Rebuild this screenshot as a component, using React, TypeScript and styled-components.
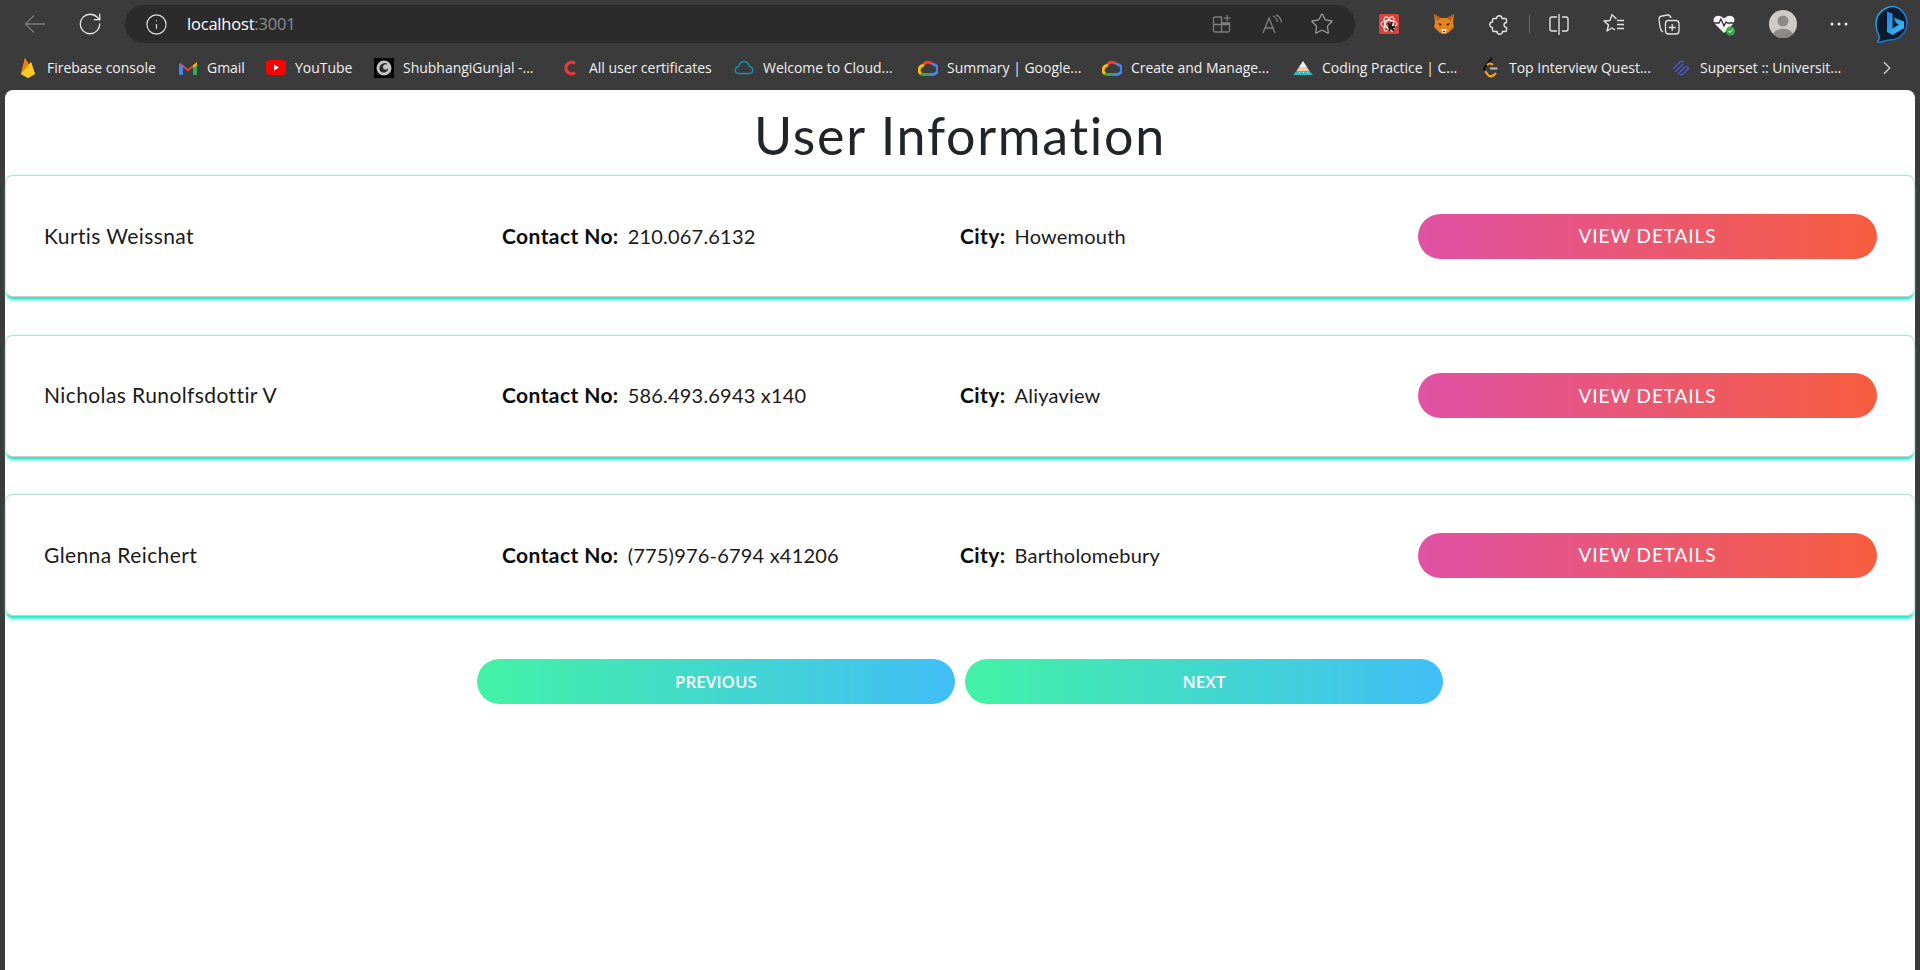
import React from "react";
import styled, { createGlobalStyle } from "styled-components";
import { Info, RotateCw, ChevronRight, Star } from "lucide-react";

const Global = createGlobalStyle`
  html, body { margin: 0; padding: 0; background: #3b3b3b; height: 100%; overflow: hidden; }
  * { box-sizing: border-box; }
  svg { flex: none; display: block; }
`;
const Browser = styled.div`width: 1920px; height: 970px; display: flex; flex-direction: column; background: #3b3b3b; font-family: "Open Sans", sans-serif;`;
const Toolbar = styled.div`height: 48px; display: flex; align-items: center; flex: none; color: #e2e2e2;`;
const NavBtn = styled.div<{ $dim?: boolean }>`width: 26px; height: 26px; margin-left: ${p => (p.$dim ? "22px" : "29px")}; color: ${p => (p.$dim ? "#7b7b7b" : "#e6e6e6")}; display: flex; align-items: center; justify-content: center;`;
const Omni = styled.div`margin-left: 22px; width: 1230px; height: 38px; border-radius: 19px; background: #2b2b2b; display: flex; align-items: center; padding: 0 21px 0 20px; color: #e2e2e2;`;
const Url = styled.div`margin-left: 19px; padding-bottom: 2px; font-size: 16.5px; letter-spacing: -0.2px; color: #fff; flex: 1;`;
const Port = styled.span`color: #8d8d8d;`;
const OmniIcon = styled.div<{ $bright?: boolean }>`display: flex; align-items: center; justify-content: center; width: 24px; height: 24px; margin-left: 26px; color: ${p => (p.$bright ? "#a0a0a0" : "#7f7f7f")};`;
const Ext = styled.div`display: flex; align-items: center; justify-content: center; width: 24px; height: 24px; flex: none;`;
const AvatarSlot = styled(Ext)`width: 28px; height: 28px; margin-left: 2px; margin-right: -1px;`;
const BingSlot = styled(Ext)`margin-left: -1px;`;
const Tools = styled.div`display: flex; align-items: center; margin-left: 22px; gap: 31px; flex: 1;`;
const Sep = styled.div`width: 1px; height: 20px; background: #666; margin: 0 -14px 0 -13px;`;
const Bookmarks = styled.div`height: 42px; display: flex; align-items: center; flex: none; padding: 0 0 3px 18px; position: relative;`;
const Bm = styled.div<{ $w: number }>`width: ${p => p.$w}px; flex: none; display: flex; align-items: center; gap: 9px; color: #f0f0f0; font-size: 14px; letter-spacing: -0.02px; white-space: nowrap;`;
const BmIcon = styled.div`width: 20px; height: 20px; display: flex; align-items: center; justify-content: center; flex: none;`;
const More = styled.div`position: absolute; right: 22px; top: 9px; color: #ddd; display: flex;`;
const Page = styled.main`flex: 1; margin: 0 5px; background: #fff; border-radius: 8px 8px 0 0; color: #1a1a1a; font-family: "Comic Sans MS", "Lato", sans-serif;`;
const Title = styled.h1`margin: 0; height: 85px; padding-top: 4px; display: flex; align-items: center; justify-content: center; font-size: 52px; letter-spacing: 1.7px; font-weight: 400; color: #212529;`;
const Cards = styled.div`display: flex; flex-direction: column; gap: 37.5px;`;
const Card = styled.section`height: 122px; border: 1px solid #d3e3e0; border-top-color: #c0dcd7; border-bottom-color: #cfcfcf; border-radius: 8px; box-shadow: 0 4px 3px -1px #20ecc4, 0 -1px 3px rgba(60, 230, 200, 0.22); display: grid; grid-template-columns: repeat(4, 458px); padding-left: 38px; align-items: center; background: #fff; font-size: 21px; letter-spacing: 0.4px;`;
const Cell = styled.div`padding-bottom: 2px;`;
const Strong = styled.b`font-weight: 700; margin-right: 9px; color: #0c0c0c;`;
const Value = styled.span`font-size: 20px; letter-spacing: 0.2px;`;
const ViewBtn = styled.button`width: 459px; height: 45px; border: 0; border-radius: 23px; padding-bottom: 2px; background: linear-gradient(90deg, #df52a6, #f65d3e); color: #fff; font: inherit; font-size: 19px; letter-spacing: 0.9px; text-transform: uppercase;`;
const Pager = styled.div`display: flex; justify-content: center; gap: 10px; margin-top: 43px;`;
const PageBtn = styled.button`width: 478px; height: 45px; border: 0; border-radius: 23px; background: linear-gradient(90deg, #43f2a5, #41bef7); color: #fff; font-family: "Open Sans", sans-serif; font-size: 17px; font-weight: 600; text-transform: uppercase;`;

const rows = [
  { name: "Kurtis Weissnat", phone: "210.067.6132", city: "Howemouth" },
  { name: "Nicholas Runolfsdottir V", phone: "586.493.6943 x140", city: "Aliyaview" },
  { name: "Glenna Reichert", phone: "(775)976-6794 x41206", city: "Bartholomebury" },
];
const GCloud = () => (
  <svg width="20" height="17" viewBox="0 0 20 17" fill="none" strokeWidth="3">
    <path d="M5.200 6.500A5.200 5.200 0 0 1 14 5" stroke="#ea4335" />
    <path d="M14 5.200a4.800 4.800 0 0 1 1 10.300H11" stroke="#4285f4" />
    <path d="M11 15.500H5a3.500 3.500 0 0 1-2-.7" stroke="#34a853" />
    <path d="M3 14.800A4.600 4.600 0 0 1 5.800 6.500" stroke="#fbbc05" />
  </svg>
);
const bookmarks: [string, number, React.ReactNode][] = [
  ["Firebase console", 160, <svg width="16" height="22" viewBox="0 0 16 22"><path d="M1 17 5 1l4 7 2-3 4 12-7 4z" fill="#ffa000" /><path d="M1 17 5 1l5 9z" fill="#f57c00" /><path d="M1 17 11 5l4 12-7 4z" fill="#ffca28" /></svg>],
  ["Gmail", 88, <svg width="18" height="14" viewBox="0 0 18 14"><path d="M1 1.500 9 8l8-6.500V4L9 10.500 1 4z" fill="#ea4335" /><path d="M0 2.500 4 5v9H1a1 1 0 0 1-1-1z" fill="#4285f4" /><path d="M18 2.500 14 5v9h3a1 1 0 0 0 1-1z" fill="#34a853" /><path d="M14 4.500 18 1v3l-4 3z" fill="#fbbc05" /></svg>],
  ["YouTube", 108, <svg width="20" height="15" viewBox="0 0 20 15"><rect width="20" height="15" rx="4" fill="#f00" /><path d="M8 4.500l5 3-5 3z" fill="#fff" /></svg>],
  ["ShubhangiGunjal -...", 186, <svg width="20" height="20" viewBox="0 0 20 20"><rect width="20" height="20" fill="#000" /><circle cx="10" cy="10" r="7.500" fill="#c4c4c4" /><path d="M6 8a5 5 0 0 1 8-1.500c-3-1-5.500.5-5 3s4 3 5 .5c.5 3-2.500 5-5 4.500C5.500 14 4.800 10.500 6 8z" fill="#2b2b2b" /></svg>],
  ["All user certificates", 174, <svg width="14" height="18" viewBox="0 0 14 18"><path d="M12 4.500A5.500 5.500 0 0 0 3 9a5.500 5.500 0 0 0 9 4.500" fill="none" stroke="#e53935" strokeWidth="3.200" /></svg>],
  ["Welcome to Cloud...", 184, <svg width="20" height="15" viewBox="0 0 20 15"><path d="M5 13.500a3.500 3.500 0 0 1-.4-7C5.500 3.500 7.500 1.500 10 1.500s4.500 2 5.400 5a3.500 3.500 0 0 1-.4 7z" fill="none" stroke="#1793b5" strokeWidth="1.400" /></svg>],
  ["Summary | Google...", 184, <GCloud />],
  ["Create and Manage...", 191, <GCloud />],
  ["Coding Practice | C...", 187, <svg width="20" height="14" viewBox="0 0 20 14"><path d="M10 0l4 6H6z" fill="#f2f2f2" /><path d="M6 6h8l2.500 4h-13z" fill="#f3c9a5" /><path d="M3.500 10h13L20 14H0z" fill="#35b8bd" /><path d="M8 7.500h1v1H8zM11 7.500h1v1h-1zM6 11h1v1H6zM10 11h1v1h-1zM14 11h1v1h-1z" fill="#fff" /></svg>],
  ["Top Interview Quest...", 191, <svg width="16" height="22" viewBox="0 0 16 22"><path d="M10 1 3 10c-1 1-1 3 0 4l3 4" fill="none" stroke="#111" strokeWidth="2.200" /><path d="M3 14l3 4c1.500 1.500 4 1.500 6 0l2-2" fill="none" stroke="#ffa116" strokeWidth="2.200" /><path d="M8 11.500h7.500" stroke="#b5b5b5" strokeWidth="2.200" /><path d="M5 8c2-2 4-2 6 0" fill="none" stroke="#ffa116" strokeWidth="1.800" /></svg>],
  ["Superset :: Universit...", 170, <svg width="20" height="18" viewBox="0 0 20 18" fill="none" stroke="#4a55c8" strokeWidth="1.700"><path d="M2 10l7-7c1-1 3-1 4 0M4 13l8-8M6.500 15.500l7-7c1-1 3-1 4 0M9 16c2 0 3-1 4-2l5-5" /></svg>],
];
export default function App() {
  return (
    <Browser>
      <Global />
      <Toolbar>
        <NavBtn $dim>
          <svg width="22" height="20" viewBox="0 0 22 20" fill="none" stroke="currentColor" strokeWidth="1.300"><path d="M21 10H1.500M10 1.500 1.500 10l8.500 8.500" /></svg>
        </NavBtn>
        <NavBtn><RotateCw size={26} strokeWidth={1.2} /></NavBtn>
        <Omni>
          <Info size={23} strokeWidth={1.2} />
          <Url>localhost<Port>:3001</Port></Url>
          <OmniIcon>
            <svg width="20" height="20" viewBox="0 0 20 20" fill="none" stroke="currentColor" strokeWidth="1.300"><path d="M9.500 3H3a1.500 1.500 0 0 0-1.500 1.500v12A1.500 1.500 0 0 0 3 18h13a1.500 1.500 0 0 0 1.500-1.500V9H9.500zM1.500 10.500h16M9.500 9v9M15 1v6.500M11.500 4.200h7" /></svg>
          </OmniIcon>
          <OmniIcon>
            <svg width="22" height="20" viewBox="0 0 22 20" fill="none" stroke="currentColor" strokeWidth="1.300"><path d="M2 19 8 4l6 15M4 14h8M12 2c2.500 1 4 3 4.500 6M15 .8c3 1.200 5 4 5.500 7.500" /></svg>
          </OmniIcon>
          <OmniIcon $bright><Star size={24} strokeWidth={1.2} /></OmniIcon>
        </Omni>
        <Tools>
          <Ext>
            <svg width="20" height="20" viewBox="0 0 20 20"><rect width="20" height="20" rx="1.500" fill="#d8443b" /><g fill="none" stroke="#fff" strokeWidth="1"><ellipse cx="10" cy="10" rx="8" ry="3.500" /><ellipse cx="10" cy="10" rx="8" ry="3.500" transform="rotate(60 10 10)" /><ellipse cx="10" cy="10" rx="8" ry="3.500" transform="rotate(120 10 10)" /></g><path d="M9 9l6 8M13 8l-3 9M9 13h7" stroke="#1d1d1d" strokeWidth="2" /></svg>
          </Ext>
          <Ext>
            <svg width="20" height="20" viewBox="0 0 20 20"><path d="M0 0l7 4h6l7-4-1 9 1 4-5 5-3 2H8l-3-2-5-5 1-4z" fill="#e8821e" /><path d="M0 0l7 4-4 3zM20 0l-7 4 4 3z" fill="#b35f16" /><path d="M7 15h6l-1.500 4h-3z" fill="#f2e4d5" /><path d="M8.500 17h3l-1.500 1.500z" fill="#222" /><path d="M4 9l4 1-2 2zM16 9l-4 1 2 2z" fill="#2a2a2a" /></svg>
          </Ext>
          <Ext>
            <svg width="24" height="24" viewBox="0 0 24 24" fill="none" stroke="currentColor" strokeWidth="1.400"><path d="M9.500 6.500a2.750 2.750 0 1 1 5.500 0H18a1.500 1.500 0 0 1 1.500 1.500v2.500a2.500 2.500 0 0 0 0 5V18a1.500 1.500 0 0 1-1.500 1.500h-2.500a2.750 2.750 0 0 1-5.500 0H7A1.500 1.500 0 0 1 5.500 18v-2.500a2.750 2.750 0 0 1 0-5.500V8A1.500 1.500 0 0 1 7 6.500z" /></svg>
          </Ext>
          <Sep />
          <Ext>
            <svg width="22" height="22" viewBox="0 0 22 22" fill="none" stroke="currentColor" strokeWidth="1.400"><path d="M9 4H4a2 2 0 0 0-2 2v10a2 2 0 0 0 2 2h5M14 4h4a2 2 0 0 1 2 2v10a2 2 0 0 1-2 2h-4M11 1v21" /></svg>
          </Ext>
          <Ext>
            <svg width="24" height="24" viewBox="0 0 24 24" fill="none" stroke="currentColor" strokeWidth="1.400" strokeLinejoin="round"><path d="M14.500 7 10 2.800 8 8.500l-6 .5 4.500 4L5 19l5-3 3 1.800M15 8.500h7M15 12.500h7M15 16.500h7" /></svg>
          </Ext>
          <Ext>
            <svg width="24" height="24" viewBox="0 0 24 24" fill="none" stroke="currentColor" strokeWidth="1.300"><rect x="8.500" y="8.500" width="13.500" height="13.500" rx="3" /><path d="M15.200 12v7M11.700 15.500h7M6 20c-1.800-1-2.500-2.500-3-5L2 7.500C1.800 5.500 3 4.300 5 4l5.500-1c1.800-.2 3 .8 3.500 3" /></svg>
          </Ext>
          <Ext>
            <svg width="24" height="24" viewBox="0 0 24 24"><path d="M12 21 3 12C1 10 1 6 3.500 4.500S9 3.500 12 6.500c3-3 6-3.500 8.500-2S23 10 21 12z" fill="#f4f4f4" /><path d="M1.500 11H7l2-4 3 7 2-4 1.500 1H22" fill="none" stroke="#333" strokeWidth="1.300" /><circle cx="18.500" cy="19" r="4.500" fill="#3fa34d" /><path d="M16.500 19l1.500 1.500 2.500-3" fill="none" stroke="#fff" strokeWidth="1" /></svg>
          </Ext>
          <AvatarSlot>
            <svg width="28" height="28" viewBox="0 0 28 28"><circle cx="14" cy="14" r="14" fill="#cdcbc8" /><circle cx="14" cy="11" r="5.500" fill="#8c8a87" /><path d="M4 24c3-7 17-7 20 0a14 14 0 0 1-20 0z" fill="#8c8a87" /></svg>
          </AvatarSlot>
          <Ext>
            <svg width="18" height="4" viewBox="0 0 18 4" fill="#eee"><circle cx="2" cy="2" r="1.500" /><circle cx="9" cy="2" r="1.500" /><circle cx="16" cy="2" r="1.500" /></svg>
          </Ext>
          <BingSlot>
            <svg width="38" height="38" viewBox="0 0 38 38">
              <defs>
                <linearGradient id="bingRing" x1="0" y1="0" x2="1" y2="1"><stop offset="0" stopColor="#22b6ee" /><stop offset="1" stopColor="#1a55c0" /></linearGradient>
                <linearGradient id="bingB" x1="0" y1="0" x2="1" y2="1"><stop offset="0" stopColor="#1f7fe8" /><stop offset="1" stopColor="#3cc3e8" /></linearGradient>
              </defs>
              <path d="M20 1.500a17 17 0 0 1 0 33c-5 .3-8 1-13 2.500-2 .5-4 .5-3-1 1-1.500 1.500-3 1-5C3 27 2 23 2 19A17.500 17.500 0 0 1 20 1.500z" fill="#0d1a2c" stroke="url(#bingRing)" strokeWidth="1.600" />
              <path d="M13 6.500l5.500 2v15l6.500-4-3-1.500-2.200-5.500 10.200 4v6.500l-11.500 7-5.500-3z" fill="url(#bingB)" />
            </svg>
          </BingSlot>
        </Tools>
      </Toolbar>
      <Bookmarks>
        {bookmarks.map(([t, w, ic]) => <Bm key={t} $w={w}><BmIcon>{ic}</BmIcon>{t}</Bm>)}
        <More><ChevronRight size={22} strokeWidth={1.2} /></More>
      </Bookmarks>
      <Page>
        <Title>User Information</Title>
        <Cards>
          {rows.map(r => (
            <Card key={r.name}>
              <Cell>{r.name}</Cell>
              <Cell><Strong>Contact No:</Strong><Value>{r.phone}</Value></Cell>
              <Cell><Strong>City:</Strong><Value>{r.city}</Value></Cell>
              <ViewBtn>View Details</ViewBtn>
            </Card>
          ))}
        </Cards>
        <Pager><PageBtn>Previous</PageBtn><PageBtn>Next</PageBtn></Pager>
      </Page>
    </Browser>
  );
}
